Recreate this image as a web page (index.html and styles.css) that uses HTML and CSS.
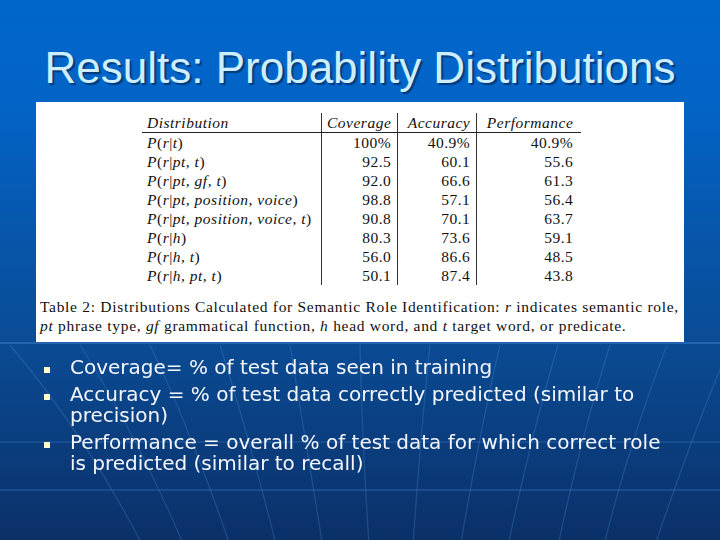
FILE: index.html
```html
<!DOCTYPE html>
<html lang="en">
<head>
    <meta charset="UTF-8">
    <title>Results: Probability Distributions</title>
    <link rel="stylesheet" href="styles.css">
</head>
<body>
<div class="slide">
    <svg class="backdrop" width="720" height="540" viewBox="0 0 720 540">
        <g stroke="#4f8ad6" stroke-width="1.2" fill="none" opacity="0.3">
            <path d="M10 345 Q 90 440 150 560"/>
            <path d="M80 345 Q 140 440 190 560"/>
            <path d="M150 345 Q 195 440 235 560"/>
            <path d="M220 345 Q 250 440 280 560"/>
            <path d="M290 345 Q 305 440 325 560"/>
            <path d="M360 345 Q 362 440 370 560"/>
            <path d="M430 345 Q 420 440 412 560"/>
            <path d="M500 345 Q 478 440 458 560"/>
            <path d="M558 345 Q 530 440 505 560"/>
            <path d="M610 345 Q 580 440 555 560"/>
            <path d="M667 345 Q 630 440 600 560"/>
            <path d="M730 345 Q 690 440 650 560"/>
        </g>
        <g stroke="#3f7ccb" stroke-width="2" opacity="0.5">
            <line x1="0" y1="343" x2="720" y2="343"/>
            <line x1="0" y1="442" x2="720" y2="442" opacity="0.5"/>
            <line x1="0" y1="490" x2="720" y2="490" opacity="0.6"/>
        </g>
    </svg>

    <h1 class="title">Results: Probability Distributions</h1>

    <div class="figure">
        <table class="dist-table">
            <thead>
            <tr>
                <th class="col-dist">Distribution</th>
                <th>Coverage</th>
                <th>Accuracy</th>
                <th>Performance</th>
            </tr>
            </thead>
            <tbody>
            <tr><td class="col-dist"><i>P</i>(<i>r</i>|<i>t</i>)</td><td>100%</td><td>40.9%</td><td>40.9%</td></tr>
            <tr><td class="col-dist"><i>P</i>(<i>r</i>|<i>pt, t</i>)</td><td>92.5</td><td>60.1</td><td>55.6</td></tr>
            <tr><td class="col-dist"><i>P</i>(<i>r</i>|<i>pt, gf, t</i>)</td><td>92.0</td><td>66.6</td><td>61.3</td></tr>
            <tr><td class="col-dist"><i>P</i>(<i>r</i>|<i>pt, position, voice</i>)</td><td>98.8</td><td>57.1</td><td>56.4</td></tr>
            <tr><td class="col-dist"><i>P</i>(<i>r</i>|<i>pt, position, voice, t</i>)</td><td>90.8</td><td>70.1</td><td>63.7</td></tr>
            <tr><td class="col-dist"><i>P</i>(<i>r</i>|<i>h</i>)</td><td>80.3</td><td>73.6</td><td>59.1</td></tr>
            <tr><td class="col-dist"><i>P</i>(<i>r</i>|<i>h, t</i>)</td><td>56.0</td><td>86.6</td><td>48.5</td></tr>
            <tr><td class="col-dist"><i>P</i>(<i>r</i>|<i>h, pt, t</i>)</td><td>50.1</td><td>87.4</td><td>43.8</td></tr>
            </tbody>
        </table>
        <p class="caption">Table 2: Distributions Calculated for Semantic Role Identification: <i>r</i> indicates semantic role,<br>
            <i>pt</i> phrase type, <i>gf</i> grammatical function, <i>h</i> head word, and <i>t</i> target word, or predicate.</p>
    </div>

    <ul class="points">
        <li>Coverage= % of test data seen in training</li>
        <li>Accuracy = % of test data correctly predicted (similar to precision)</li>
        <li>Performance = overall % of test data for which correct role is predicted (similar to recall)</li>
    </ul>
</div>
</body>
</html>
```

FILE: styles.css
```css
body {
    margin: 0;
    background-color: #0b3068;
}
.slide {
    position: relative;
    width: 720px;
    height: 540px;
    overflow: hidden;
    background: linear-gradient(to bottom, #0066cc 0, #0364c7 100px, #0a4b94 345px, #0b3068 540px);
}
.backdrop {
    position: absolute;
    left: 0;
    top: 0;
}
.title {
    position: relative;
    margin: 0;
    padding-top: 46px;
    font-family: "Liberation Sans", Arial, sans-serif;
    font-size: 44px;
    font-weight: normal;
    line-height: 44px;
    text-align: center;
    color: #cdeeff;
    text-shadow: 2px 2px 1px #023a7a;
}
.figure {
    position: relative;
    margin: 12px 36px 0;
    height: 240px;
    padding-top: 11px;
    box-sizing: border-box;
    background-color: #fff;
    font-family: "Liberation Serif", "Times New Roman", serif;
    color: #111;
}
.dist-table {
    border-collapse: collapse;
    margin-left: 106px;
    font-size: 15.5px;
    letter-spacing: 0.5px;
}
.dist-table th, .dist-table td {
    height: 19px;
    padding: 0 6px 0 5px;
    line-height: 19px;
    text-align: right;
    white-space: nowrap;
    border-left: 1px solid #333;
}
.dist-table th {
    font-style: italic;
    font-weight: normal;
    border-bottom: 1px solid #222;
    height: 18px;
}
.dist-table th:nth-child(2), .dist-table td:nth-child(2) {
    width: 63px;
}
.dist-table th:nth-child(3), .dist-table td:nth-child(3) {
    width: 67px;
}
.dist-table th:nth-child(4), .dist-table td:nth-child(4) {
    width: 91px;
    padding-right: 8px;
}
.dist-table .col-dist {
    width: 168px;
    text-align: left;
    border-left: none;
}
.caption {
    margin: 12px 0 0;
    padding-left: 4px;
    font-size: 15.5px;
    letter-spacing: 0.7px;
    line-height: 19px;
    white-space: nowrap;
}
.points {
    position: relative;
    list-style: none;
    margin: 15px 0 0;
    padding: 0 48px 0 44px;
    font-family: "DejaVu Sans", Verdana, sans-serif;
    font-size: 20px;
    line-height: 21px;
    color: #f4f7ff;
}
.points li {
    display: flex;
    margin-bottom: 6px;
}
.points li::before {
    content: "";
    flex: 0 0 6px;
    height: 6px;
    margin-top: 10px;
    margin-right: 20px;
    background-color: #ffffcc;
}
```
